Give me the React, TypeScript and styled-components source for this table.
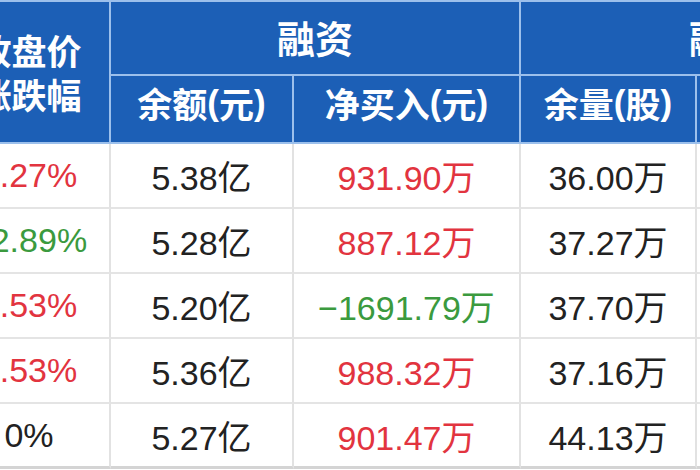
import React from 'react';
import styled, { createGlobalStyle } from 'styled-components';

const GlobalStyle = createGlobalStyle`
  html, body {
    margin: 0;
    padding: 0;
    background: #ffffff;
  }
`;

const Viewport = styled.div`
  width: 700px;
  height: 470px;
  overflow: hidden;
  background: #ffffff;
`;

// 表格左侧被截掉一部分，所以整体向左偏移
const Grid = styled.div`
  display: grid;
  grid-template-columns: 162px 183px 227px 176px 238px;
  grid-template-rows: 74px 68px repeat(5, 65px);
  margin-left: -51px;
  width: 986px;
  border-top: 2px solid #9cc0ec;
  font-family: 'Liberation Sans', 'Noto Sans CJK SC', Arial, sans-serif;
`;

const HeadCell = styled.div<{ $span?: number; $rows?: number; $top?: boolean }>`
  box-sizing: border-box;
  grid-column: span ${(p) => p.$span || 1};
  grid-row: span ${(p) => p.$rows || 1};
  display: flex;
  align-items: center;
  justify-content: center;
  text-align: center;
  background: #1c5fb6;
  color: #ffffff;
  font-family: 'Noto Sans CJK SC', 'Liberation Sans', sans-serif;
  font-weight: 700;
  font-size: ${(p) => (p.$top ? '38px' : p.$rows ? '35px' : '35px')};
  line-height: 44px;
  border-right: 2px solid #9cc0ec;
  border-bottom: 2px solid #9cc0ec;
  padding-bottom: ${(p) => (p.$top ? '2px' : p.$rows ? '0' : '12px')};
  white-space: nowrap;
`;

const Paren = styled.span`
  font-family: 'Liberation Sans', sans-serif;
  font-weight: 700;
`;

const Cell = styled.div<{ $tone?: 'up' | 'down' | 'flat'; $last?: boolean }>`
  box-sizing: border-box;
  display: flex;
  align-items: center;
  justify-content: center;
  font-size: 34px;
  color: ${(p) => (p.$tone === 'up' ? '#e2343f' : p.$tone === 'down' ? '#3b9a3e' : '#222222')};
  border-right: 2px solid #e2e2e2;
  border-bottom: ${(p) => (p.$last ? '3px solid #d4d4d4' : '2px solid #e4e4e4')};
  white-space: nowrap;
`;

type Tone = 'up' | 'down' | 'flat';

interface Row {
  change: string;
  changeTone: Tone;
  balance: string;
  netBuy: string;
  netTone: Tone;
  shares: string;
}

const rows: Row[] = [
  { change: '1.27%', changeTone: 'up', balance: '5.38亿', netBuy: '931.90万', netTone: 'up', shares: '36.00万' },
  { change: '−2.89%', changeTone: 'down', balance: '5.28亿', netBuy: '887.12万', netTone: 'up', shares: '37.27万' },
  { change: '1.53%', changeTone: 'up', balance: '5.20亿', netBuy: '−1691.79万', netTone: 'down', shares: '37.70万' },
  { change: '1.53%', changeTone: 'up', balance: '5.36亿', netBuy: '988.32万', netTone: 'up', shares: '37.16万' },
  { change: '0%', changeTone: 'flat', balance: '5.27亿', netBuy: '901.47万', netTone: 'up', shares: '44.13万' },
];

const withParens = (label: string, unit: string) => (
  <>
    {label}
    <Paren>(</Paren>
    {unit}
    <Paren>)</Paren>
  </>
);

export default function App() {
  return (
    <>
      <GlobalStyle />
      <Viewport>
        <Grid>
          <HeadCell $rows={2}>
            收盘价
            <br />
            涨跌幅
          </HeadCell>
          <HeadCell $span={2} $top>
            融资
          </HeadCell>
          <HeadCell $span={2} $top>
            融券
          </HeadCell>
          <HeadCell>{withParens('余额', '元')}</HeadCell>
          <HeadCell>{withParens('净买入', '元')}</HeadCell>
          <HeadCell>{withParens('余量', '股')}</HeadCell>
          <HeadCell>{withParens('卖出量', '股')}</HeadCell>

          {rows.map((r, i) => {
            const last = i === rows.length - 1;
            return (
              <React.Fragment key={i}>
                <Cell $tone={r.changeTone} $last={last}>{r.change}</Cell>
                <Cell $last={last}>{r.balance}</Cell>
                <Cell $tone={r.netTone} $last={last}>{r.netBuy}</Cell>
                <Cell $last={last}>{r.shares}</Cell>
                <Cell $last={last}>0.00</Cell>
              </React.Fragment>
            );
          })}
        </Grid>
      </Viewport>
    </>
  );
}
